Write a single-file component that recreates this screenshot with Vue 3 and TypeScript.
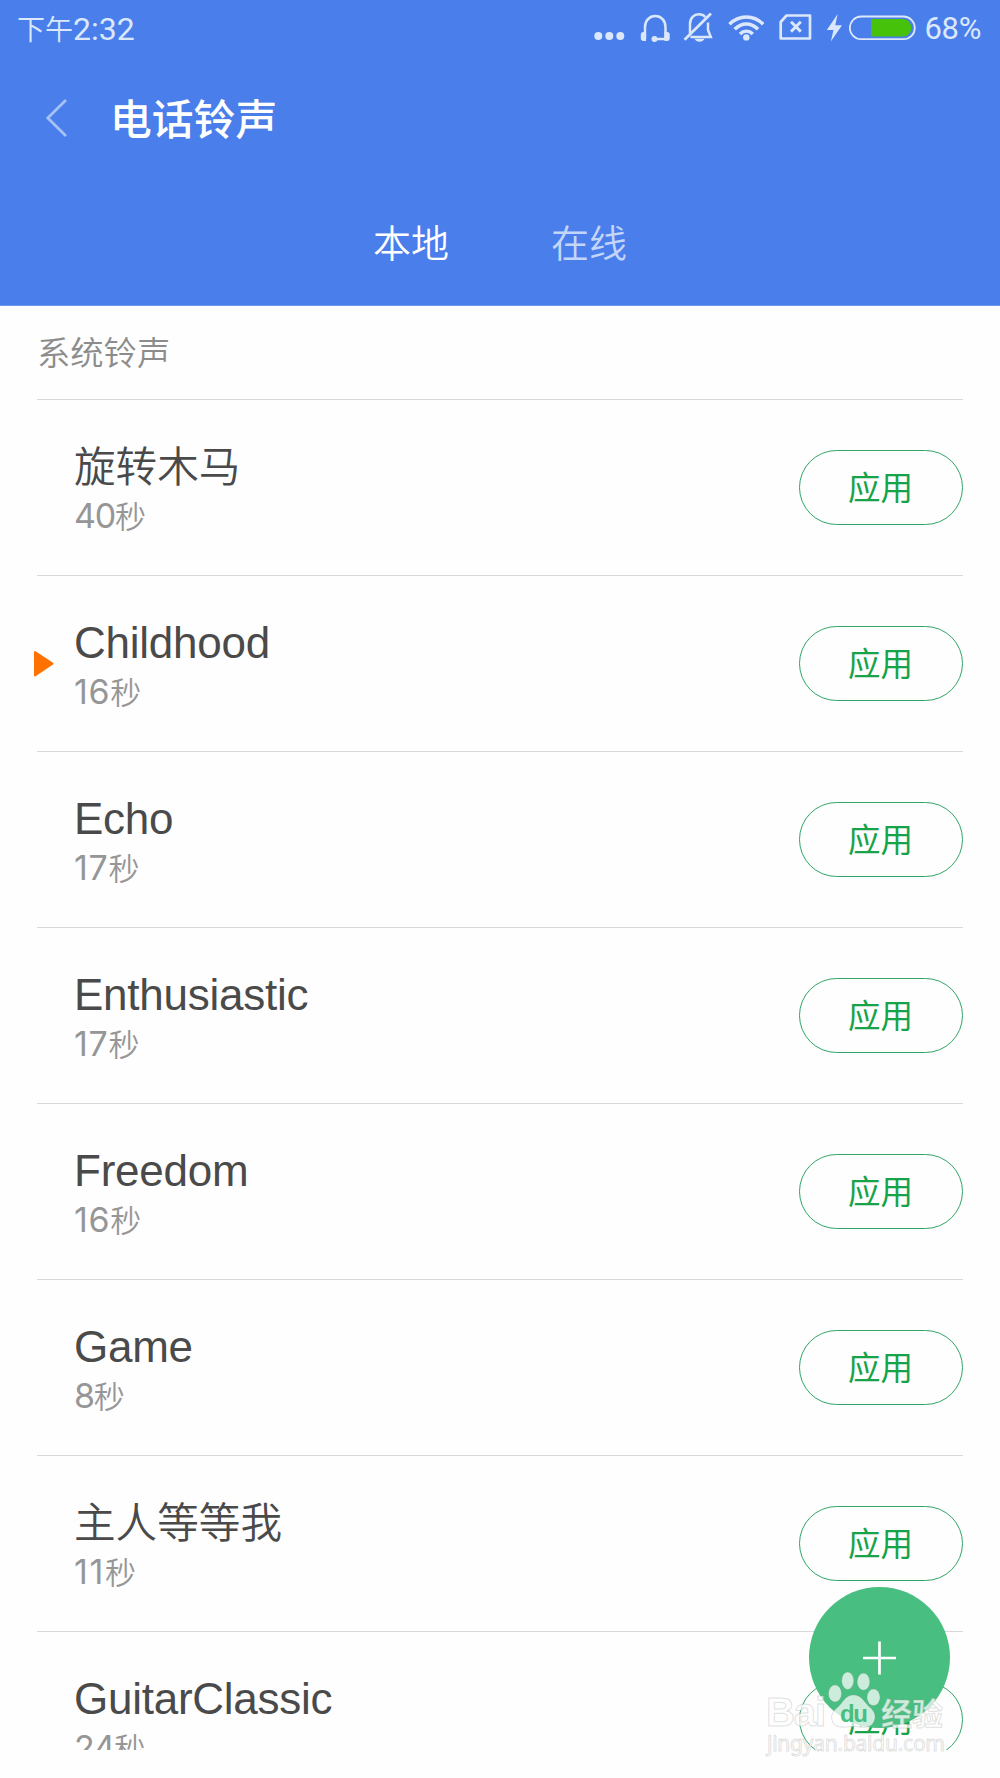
<script setup lang="ts">
interface Ringtone {
  name: string
  seconds: number
  playing?: boolean
}

const ringtones: Ringtone[] = [
  { name: '旋转木马', seconds: 40 },
  { name: 'Childhood', seconds: 16, playing: true },
  { name: 'Echo', seconds: 17 },
  { name: 'Enthusiastic', seconds: 17 },
  { name: 'Freedom', seconds: 16 },
  { name: 'Game', seconds: 8 },
  { name: '主人等等我', seconds: 11 },
  { name: 'GuitarClassic', seconds: 24 },
]

const isLatin = (name: string): boolean => /^[A-Za-z]/.test(name)

// The digit 1 is narrow in this face, so durations containing it are tracked wider.
const tracking = (seconds: number): string => {
  const text = String(seconds)
  if (text === '11') return 'loose'
  return text.includes('1') ? 'open' : 'tight'
}
</script>

<template>
  <div class="screen">
    <header class="header">
      <div class="status">
        <span class="time"><span class="ampm">下午</span>2:32</span>
        <div class="icons">
          <svg class="dots" width="32" height="56" viewBox="593 0 32 56">
            <g fill="#dbe8fc"><circle cx="598.3" cy="36" r="4" /><circle cx="609.3" cy="36" r="4" /><circle cx="620.3" cy="36" r="4" /></g>
          </svg>
          <svg class="headset" width="32" height="56" viewBox="639 0 32 56">
            <path d="M645 39V27c0-6.500 4.500-11 10.300-11s10.200 4.500 10.200 11v12M654 39h11.500" fill="none" stroke="#dbe8fc" stroke-width="2.500" />
            <path d="M646 32v9h-2.500a2.700 2.700 0 0 1-2.700-2.700v-3.600a2.700 2.700 0 0 1 2.700-2.700zM664.500 32v9h2.500a2.700 2.700 0 0 0 2.700-2.700v-3.600a2.700 2.700 0 0 0-2.700-2.700z" fill="#dbe8fc" />
            <circle cx="654.500" cy="39" r="3" fill="#dbe8fc" />
          </svg>
          <svg class="bell" width="30" height="56" viewBox="683 0 30 56">
            <g fill="none" stroke="#dbe8fc" stroke-width="2.500">
              <path d="M690 33.500V24c0-6 4-9.700 8.800-9.700 2.700 0 4.900.9 6.500 2.700M708 22.500V30l2.800 7h-20.300" />
              <path d="M684.500 39.800L711 13.500" stroke-width="2.700" />
            </g>
            <path d="M694.500 38.800h10c-1 2-2.800 3-5 3s-4-1-5-3z" fill="#dbe8fc" />
          </svg>
          <svg class="wifi" width="36" height="56" viewBox="728 0 36 56">
            <g fill="none" stroke="#dbe8fc" stroke-width="3.600">
              <path d="M729.500 24.200c9.500-9.700 24.200-9.700 33.700 0" />
              <path d="M734.700 29.300c7-7 16.300-7 23.300 0" />
              <path d="M740 34c3.800-3.600 9-3.600 12.800 0" />
            </g>
            <circle cx="746.300" cy="37.400" r="3.200" fill="#dbe8fc" />
          </svg>
          <svg class="sim" width="34" height="56" viewBox="778 0 34 56">
            <path d="M786.500 15.500H810v23H780.700V22z" fill="none" stroke="#dbe8fc" stroke-width="2.700" stroke-linejoin="round" />
            <path d="M791 21.800l9.800 9.800M800.800 21.800l-9.800 9.800" stroke="#dbe8fc" stroke-width="2.900" />
          </svg>
          <svg class="bolt" width="18" height="56" viewBox="826 0 18 56">
            <path d="M837.700 14L826.800 30h6.700l-2.700 11.500L842 25.300h-6.800z" fill="#dbe8fc" />
          </svg>
          <svg class="battery" width="68" height="56" viewBox="848.500 0 68 56">
            <rect x="849.300" y="16.500" width="65" height="22.700" rx="11.300" fill="none" stroke="#dbe8fc" stroke-width="1.800" />
            <path d="M870.500 19h33a8.900 8.900 0 0 1 0 17.500h-33z" fill="#47c20b" />
          </svg>
        </div>
        <span class="percent">68%</span>
      </div>
      <div class="title-bar">
        <svg class="back" width="24" height="42" viewBox="0 0 24 42">
          <path d="M21 3L2.800 21L21 39" fill="none" stroke="#a5c1f6" stroke-width="2.800" />
        </svg>
        <h1>电话铃声</h1>
      </div>
      <nav class="tabs">
        <span class="tab active">本地</span>
        <span class="tab">在线</span>
      </nav>
    </header>

    <main class="content">
      <h2 class="section">系统铃声</h2>
      <ul class="list">
        <li v-for="tone in ringtones" :key="tone.name" class="row">
          <svg v-if="tone.playing" class="playing" width="20" height="27" viewBox="0 0 20 27">
            <path d="M1 2v23.500L18.500 13.700z" fill="#ff7200" stroke="#ff7200" stroke-width="2" stroke-linejoin="round" />
          </svg>
          <div class="info">
            <div class="name" :class="{ latin: isLatin(tone.name) }">{{ tone.name }}</div>
            <div class="duration" :class="tracking(tone.seconds)">{{ tone.seconds }}<span class="unit">秒</span></div>
          </div>
          <button class="apply" type="button">应用</button>
        </li>
      </ul>
    </main>

    <div class="fab">
      <svg width="34" height="34" viewBox="0 0 34 34"><path d="M16.500 .5v33M0 17h33" stroke="#fff" stroke-width="2.700" /></svg>
    </div>

    <svg class="watermark" width="200" height="100" viewBox="760 1664 200 100">
      <g class="mark">
        <text x="766" y="1726" class="brand" textLength="60">Bai</text>
        <text x="881" y="1725" class="cjk" textLength="62">经验</text>
        <text x="767" y="1750.500" class="url" textLength="178">jingyan.baidu.com</text>
        <ellipse cx="835" cy="1693.500" rx="6.500" ry="8.500" />
        <ellipse cx="847.700" cy="1680.700" rx="6" ry="8.700" />
        <ellipse cx="863.500" cy="1681.700" rx="6.300" ry="8.500" />
        <ellipse cx="873.500" cy="1697.300" rx="6.500" ry="8.300" />
        <path d="M853.500 1695c8 0 11 7.500 16 12 5 4.300 6.500 8.500 5 13-2 6.500-7.500 8-14 7-4-.7-10-.7-14 0-7 1-13-1-14.500-7-1.200-5 1-9 6-13 5-4.500 7.500-12 15.500-12z" />
      </g>
      <text x="840" y="1721.500" class="du" textLength="28">du</text>
    </svg>
  </div>
</template>

<style>
body {
  margin: 0;
  background: #fefefe;
}
</style>

<style scoped>
.screen {
  position: relative;
  width: 1000px;
  height: 1778px;
  overflow: hidden;
  background: #fefefe;
  font-family: "Liberation Sans", "Noto Sans CJK SC", sans-serif;
}
.header {
  box-sizing: border-box;
  height: 306px;
  border-bottom: 1px solid #6d97ef;
  background: #4a7eea;
}
.status {
  display: flex;
  height: 56px;
  padding: 0 17px;
  color: #dbe8fc;
  font-family: Roboto, "Noto Sans CJK SC", sans-serif;
  font-weight: 400;
}
.time {
  font-size: 32px;
  line-height: 58px;
}
.ampm {
  font-size: 28px;
  font-weight: 350;
}
.icons {
  display: flex;
  margin-left: auto;
}
.headset { margin-left: 14px; }
.bell { margin-left: 12px; }
.wifi { margin-left: 15px; }
.sim { margin-left: 14px; }
.bolt { margin-left: 14px; }
.battery { margin-left: 4.500px; }
.percent {
  margin-left: 8px;
  width: 58.500px;
  font-size: 31px;
  line-height: 58px;
  letter-spacing: -0.300px;
  white-space: nowrap;
}
.title-bar {
  display: flex;
  align-items: center;
  height: 124px;
  padding-left: 45px;
}
h1 {
  margin: -3px 0 0 41px;
  color: #fff;
  font: 500 41.800px/60px "Noto Sans CJK SC", sans-serif;
}
.tabs {
  display: flex;
  justify-content: center;
  gap: 102px;
  padding-top: 31px;
}
.tab {
  color: #c3d6fa;
  font: 350 38px/60px "Noto Sans CJK SC", sans-serif;
}
.tab.active {
  color: #fff;
}
.content {
  height: 1444px;
  overflow: hidden;
  padding: 0 37px;
}
.section {
  margin: 0;
  height: 93px;
  color: #8c8c8c;
  font: 350 33.300px/90px "Noto Sans CJK SC", sans-serif;
}
.list {
  margin: 0;
  padding: 0;
  list-style: none;
}
.row {
  position: relative;
  display: flex;
  align-items: center;
  justify-content: space-between;
  box-sizing: border-box;
  height: 176px;
  border-top: 1px solid #d8d8d8;
}
.playing {
  position: absolute;
  left: -3px;
  top: 74px;
}
.info {
  padding: 1px 0 0 37px;
}
.name {
  height: 51px;
  color: #4a4a4a;
  font: 350 41.600px/50px "Noto Sans CJK SC", sans-serif;
}
.name.latin {
  font: 400 44px/55px "Liberation Sans", sans-serif;
  letter-spacing: -0.250px;
}
.duration {
  height: 48px;
  color: #969696;
  font: 400 34px/50px Inter, "Noto Sans CJK SC", sans-serif;
  font-kerning: none;
}
.duration.tight {
  letter-spacing: -1.200px;
}
.duration.open {
  letter-spacing: 0.700px;
}
.duration.loose {
  letter-spacing: 1.700px;
}
.unit {
  font-family: "Noto Sans CJK SC", sans-serif;
  font-size: 31px;
  font-weight: 350;
  letter-spacing: 0;
}
.apply {
  width: 164px;
  height: 75px;
  padding: 0 1px 3px 0;
  border: 1px solid #2fa566;
  border-radius: 38px;
  background: transparent;
  color: #16a34a;
  font: 400 32.500px/70px "Noto Sans CJK SC", sans-serif;
}
.fab {
  position: absolute;
  left: 809px;
  top: 1587px;
  display: flex;
  align-items: center;
  justify-content: center;
  width: 141px;
  height: 141px;
  border-radius: 50%;
  background: #48bf80;
}
.watermark {
  position: absolute;
  left: 760px;
  top: 1664px;
}
.mark {
  fill: rgba(255, 255, 255, 0.72);
  stroke: rgba(150, 150, 150, 0.3);
  stroke-width: 1px;
}
.brand {
  font: 700 40px "Liberation Sans", sans-serif;
}
.cjk {
  font: 700 31px "Noto Sans CJK SC", sans-serif;
}
.url {
  font: 400 21px "Noto Sans", sans-serif;
}
.du {
  fill: #48bf80;
  font: 700 24px "Liberation Sans", sans-serif;
}
</style>
